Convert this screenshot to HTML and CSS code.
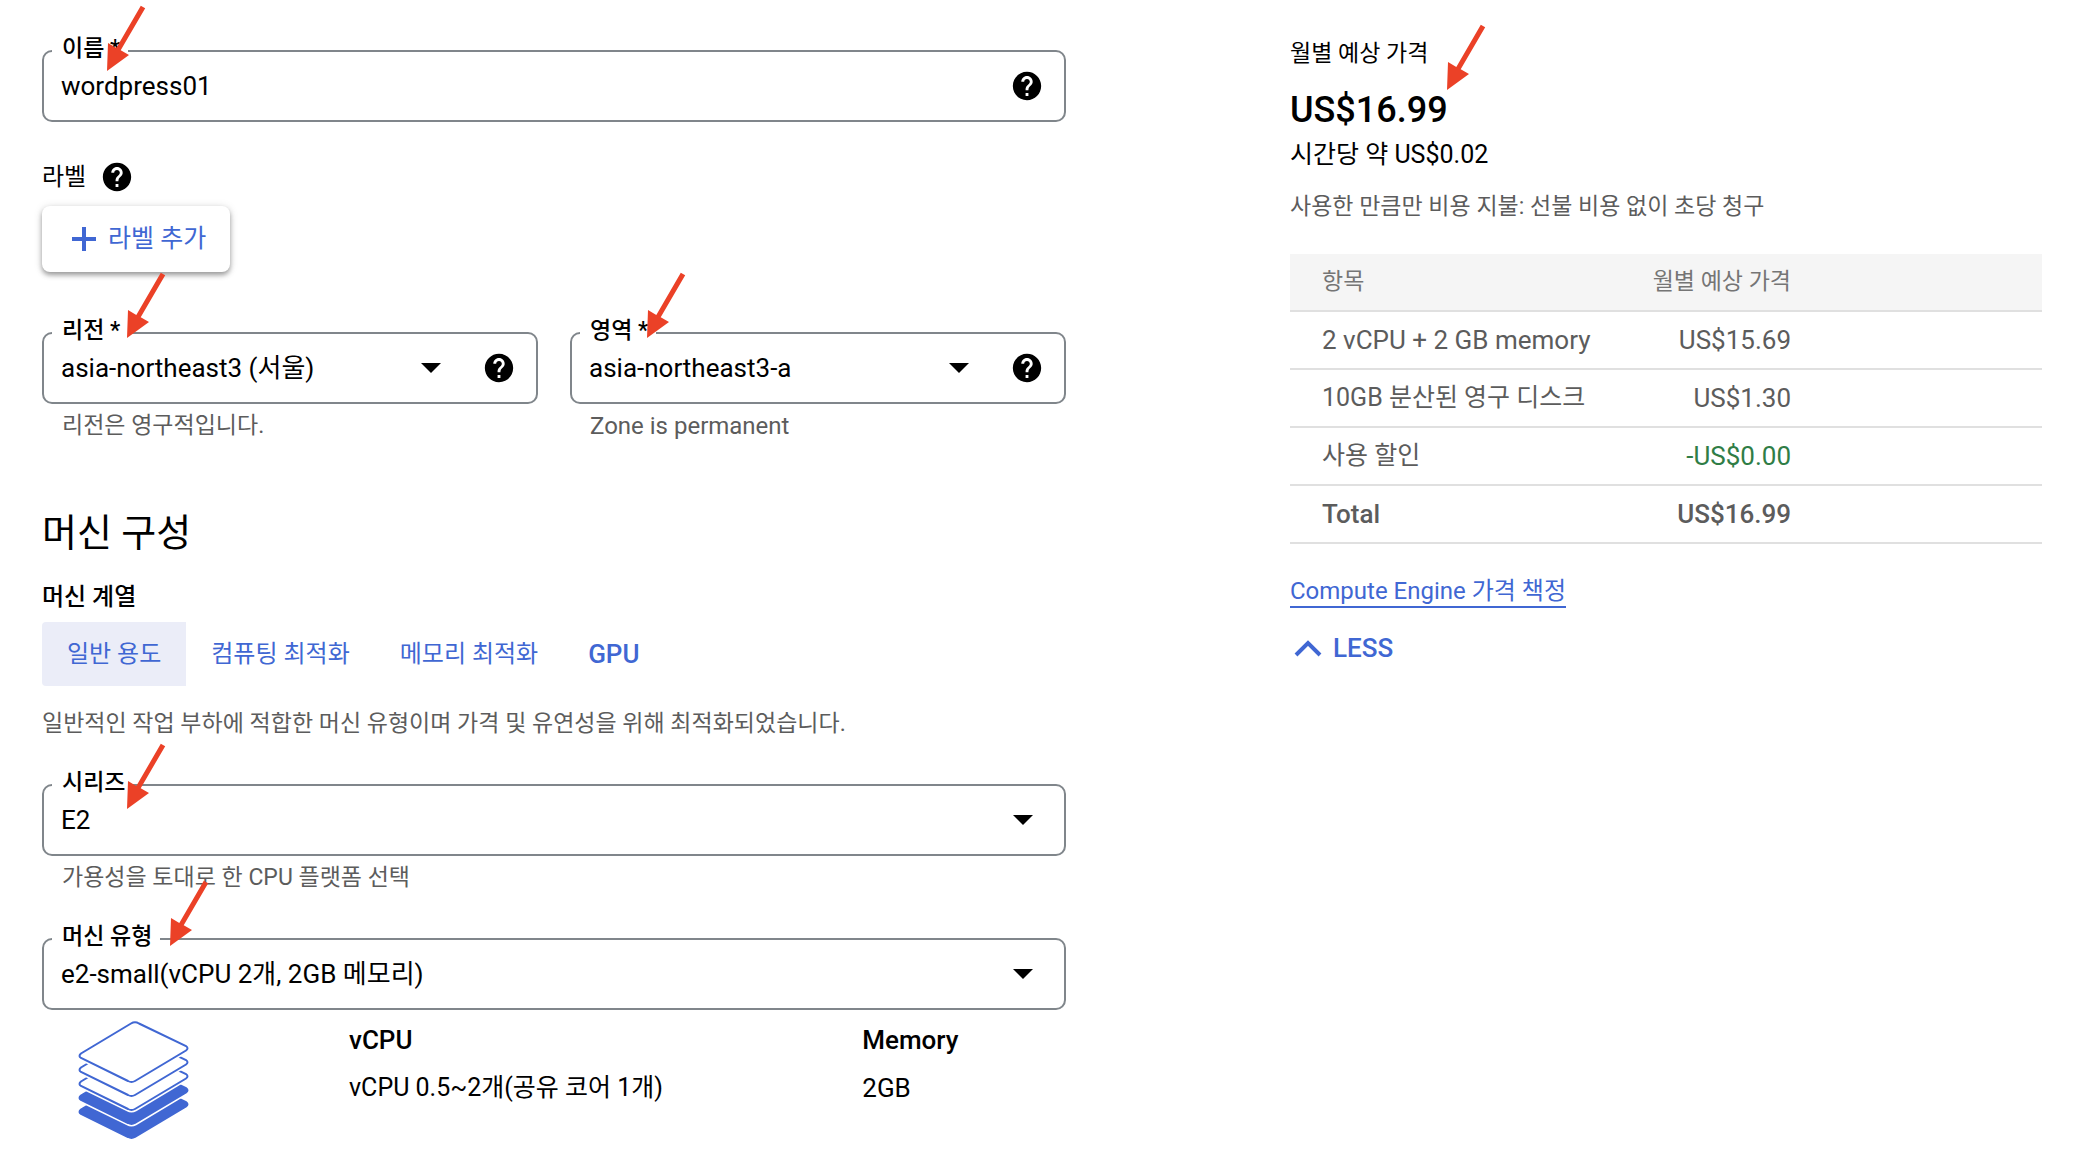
FILE: index.html
```html
<!DOCTYPE html>
<html lang="ko">
<head>
    <meta charset="UTF-8">
    <meta name="viewport" content="width=device-width, initial-scale=1.0">
    <title>인스턴스 만들기</title>

    <link rel="stylesheet" href="styles.css">
</head>
<body>

<!--Shared icons-->
<svg class="icon-defs" aria-hidden="true">
    <symbol id="help" viewBox="0 0 24 24">
        <path d="M12 2C6.48 2 2 6.48 2 12s4.48 10 10 10 10-4.48 10-10S17.52 2 12 2zm1 17h-2v-2h2v2zm2.07-7.75l-.9.92C13.45 12.9 13 13.5 13 15h-2v-.5c0-1.1.45-2.1 1.17-2.83l1.24-1.26c.37-.36.59-.86.59-1.41 0-1.1-.9-2-2-2s-2 .9-2 2H8c0-2.21 1.79-4 4-4s4 1.79 4 4c0 .88-.36 1.68-.93 2.25z"/>
    </symbol>
    <symbol id="caret" viewBox="0 0 20 10">
        <path d="M0 0h20L10 10z"/>
    </symbol>
    <symbol id="arrow" viewBox="0 0 40 68">
        <path d="M1 67 2 39l8.300 5L34.800 1.800l4.400 2.400-24.500 42L23 51z"/>
    </symbol>
</svg>

<div class="page">
    <form class="config">
        <!--Name-->
        <div class="field">
            <label class="field-label" for="name">이름 *</label>
            <div class="field-box">
                <input id="name" type="text" value="wordpress01">
                <button class="help" type="button" aria-label="도움말"><svg><use href="#help"/></svg></button>
            </div>
            <svg class="arrow arrow-name"><use href="#arrow"/></svg>
        </div>

        <!--Labels-->
        <div class="labels">
            <div class="labels-title">
                <span>라벨</span>
                <button class="help" type="button" aria-label="도움말"><svg><use href="#help"/></svg></button>
            </div>
            <button class="add-label" type="button">
                <svg viewBox="0 0 24 24"><path d="M10 0h4v10h10v4H14v10h-4V14H0v-4h10z"/></svg>
                라벨 추가
            </button>
        </div>

        <!--Region and zone-->
        <div class="field-row">
            <div class="field">
                <label class="field-label" for="region">리전 *</label>
                <div class="field-box">
                    <select id="region"><option>asia-northeast3 (서울)</option></select>
                    <svg class="caret"><use href="#caret"/></svg>
                    <button class="help" type="button" aria-label="도움말"><svg><use href="#help"/></svg></button>
                </div>
                <p class="hint">리전은 영구적입니다.</p>
                <svg class="arrow arrow-region"><use href="#arrow"/></svg>
            </div>
            <div class="field">
                <label class="field-label" for="zone">영역 *</label>
                <div class="field-box">
                    <select id="zone"><option>asia-northeast3-a</option></select>
                    <svg class="caret"><use href="#caret"/></svg>
                    <button class="help" type="button" aria-label="도움말"><svg><use href="#help"/></svg></button>
                </div>
                <p class="hint hint-latin">Zone is permanent</p>
                <svg class="arrow arrow-zone"><use href="#arrow"/></svg>
            </div>
        </div>

        <!--Machine configuration-->
        <h2>머신 구성</h2>
        <h3>머신 계열</h3>
        <div class="tabs">
            <button class="tab active" type="button">일반 용도</button>
            <button class="tab" type="button">컴퓨팅 최적화</button>
            <button class="tab" type="button">메모리 최적화</button>
            <button class="tab tab-latin" type="button">GPU</button>
        </div>
        <p class="family-text">일반적인 작업 부하에 적합한 머신 유형이며 가격 및 유연성을 위해 최적화되었습니다.</p>

        <div class="field">
            <label class="field-label" for="series">시리즈</label>
            <div class="field-box">
                <select id="series"><option>E2</option></select>
                <svg class="caret"><use href="#caret"/></svg>
            </div>
            <p class="hint">가용성을 토대로 한 CPU 플랫폼 선택</p>
            <svg class="arrow arrow-series"><use href="#arrow"/></svg>
        </div>

        <div class="field field-type">
            <label class="field-label" for="type">머신 유형</label>
            <div class="field-box">
                <select id="type"><option>e2-small(vCPU 2개, 2GB 메모리)</option></select>
                <svg class="caret"><use href="#caret"/></svg>
            </div>
            <svg class="arrow arrow-type"><use href="#arrow"/></svg>
        </div>

        <!--Machine specs-->
        <div class="specs">
            <svg class="stack" viewBox="0 0 112 120">
                <defs>
                    <path id="layer" d="M53 3.500Q57 1 61 3.500L108 26Q111 28 108 30.500L57 61Q53.500 63 50 61L3 38Q0 36 3 33.500z"/>
                </defs>
                <!--Drawn bottom up, each layer has a white rim under it-->
                <use class="slab" href="#layer" y="56"/>
                <use class="rim" href="#layer" y="42"/>
                <use class="slab" href="#layer" y="42"/>
                <use class="rim" href="#layer" y="28"/>
                <use class="sheet" href="#layer" y="28"/>
                <use class="rim" href="#layer" y="14"/>
                <use class="sheet" href="#layer" y="14"/>
                <use class="rim" href="#layer"/>
                <use class="sheet" href="#layer"/>
            </svg>
            <dl>
                <dt>vCPU</dt>
                <dd class="mixed">vCPU 0.5~2개(공유 코어 1개)</dd>
            </dl>
            <dl>
                <dt>Memory</dt>
                <dd>2GB</dd>
            </dl>
        </div>
    </form>

    <!--Monthly estimate-->
    <aside class="estimate">
        <p class="estimate-title">월별 예상 가격</p>
        <p class="price">US$16.99
            <svg class="arrow arrow-price"><use href="#arrow"/></svg>
        </p>
        <p class="hourly mixed">시간당 약 US$0.02</p>
        <p class="pay-text">사용한 만큼만 비용 지불: 선불 비용 없이 초당 청구</p>

        <table>
            <thead>
                <tr><th>항목</th><th>월별 예상 가격</th><th></th></tr>
            </thead>
            <tbody>
                <tr><td>2 vCPU + 2 GB memory</td><td>US$15.69</td><td></td></tr>
                <tr><td class="mixed">10GB 분산된 영구 디스크</td><td>US$1.30</td><td></td></tr>
                <tr><td class="mixed">사용 할인</td><td class="discount">-US$0.00</td><td></td></tr>
                <tr class="total"><td>Total</td><td>US$16.99</td><td></td></tr>
            </tbody>
        </table>

        <a class="pricing-link" href="#">Compute Engine 가격 책정</a>
        <button class="less" type="button">
            <svg viewBox="0 0 28 18"><path d="M2 16 14 4l12 12"/></svg>
            LESS
        </button>
    </aside>
</div>

</body>
</html>
```
FILE: styles.css
```css
* {
    box-sizing: border-box;
}

body {
    margin: 0;
    background-color: #fff;
    color: #000;
    font-family: Roboto, "Noto Sans CJK KR", sans-serif;
    font-size: 26px;
    line-height: 32px;
}

p, h2, h3, dl, dd {
    margin: 0;
}

button, input, select {
    font: inherit;
    color: inherit;
    margin: 0;
    padding: 0;
    border: none;
    background: none;
}

button {
    cursor: pointer;
}

.icon-defs {
    display: none;
}

/* Hangul runs wide next to Roboto */
.mixed {
    font-size: 25px;
}

/* Form on the left, price on the right */
.page {
    display: grid;
    grid-template-columns: 1024fr 752fr;
    gap: 224px;
    padding: 0 50px 24px 42px;
}

.config {
    padding-top: 50px;
}

/* Outlined fields */
.field {
    position: relative;
    flex: 1;
}

.field-label {
    position: absolute;
    left: 10px;
    top: -17px;
    padding: 0 8px 0 10px;
    background-color: #fff;
    font-size: 23px;
    font-weight: 500;
}

.field-box {
    display: flex;
    align-items: center;
    height: 72px;
    padding: 0 20px 0 17px;
    border: 2px solid #80868b;
    border-radius: 10px;
}

.field-box input,
.field-box select {
    flex: 1;
    min-width: 0;
    height: 40px;
    appearance: none;
    outline: none;
}

.caret {
    width: 20px;
    height: 10px;
    margin-right: 11px;
    pointer-events: none;
}

.caret + .help {
    margin-left: 30px;
}

.help {
    display: flex;
}

.help svg {
    width: 34px;
    height: 34px;
}

.hint {
    padding: 6px 20px 0;
    color: #5c5c5c;
    font-size: 23px;
}

.hint-latin {
    font-size: 24px;
}

.field-row {
    display: flex;
    gap: 32px;
    margin-top: 60px;
}

/* Labels */
.labels {
    margin-top: 38px;
}

.labels-title {
    display: flex;
    align-items: center;
    gap: 14px;
    height: 34px;
    font-size: 24px;
}

.add-label {
    display: flex;
    align-items: center;
    gap: 12px;
    height: 66px;
    margin-top: 12px;
    padding: 0 24px 0 30px;
    border-radius: 8px;
    box-shadow: 0 3px 5px rgba(0, 0, 0, 0.35), 0 1px 10px rgba(0, 0, 0, 0.12);
    color: #4067d3;
    font-size: 25px;
}

.add-label svg {
    width: 24px;
    height: 24px;
    fill: currentColor;
}

/* Machine configuration */
h2 {
    margin-top: 67px;
    font-size: 38px;
    font-weight: 400;
    line-height: 48px;
}

h3 {
    margin-top: 24px;
    font-size: 24px;
    font-weight: 500;
}

.tabs {
    display: flex;
    margin-top: 9px;
}

.tab {
    height: 64px;
    padding: 0 25px;
    color: #4067d3;
    font-size: 24px;
}

.tab.active {
    background-color: #ebedf8;
    border-radius: 4px 0 0 4px;
}

.tab-latin {
    font-size: 26px;
    font-weight: 500;
}

.family-text {
    margin: 22px 0 44px;
    color: #5c5c5c;
    font-size: 23px;
}

.field-type {
    margin-top: 44px;
}

.specs {
    display: flex;
    padding: 10px 0 0 36px;
}

.stack {
    width: 112px;
    height: 120px;
    margin-right: 159px;
}

.specs dl {
    flex: 514 1 0;
}

.specs dl + dl {
    flex-grow: 204;
}

.specs dt {
    margin: 4px 0 16px;
    font-weight: 500;
}

.sheet {
    fill: #fff;
    stroke: #4067d3;
    stroke-width: 2;
}

.slab {
    fill: #4067d3;
    stroke: #4067d3;
    stroke-width: 2;
}

.rim {
    fill: #fff;
    stroke: #fff;
    stroke-width: 5;
}

/* Estimate */
.estimate {
    padding-top: 38px;
}

.estimate-title {
    font-size: 23px;
}

.price {
    position: relative;
    margin-top: 16px;
    font-size: 36px;
    font-weight: 500;
    line-height: 48px;
}

.hourly {
    margin-top: 5px;
}

.pay-text {
    margin-top: 20px;
    color: #5c5c5c;
    font-size: 23px;
}

table {
    width: 100%;
    margin-top: 31px;
    border-collapse: collapse;
    table-layout: fixed;
    color: #5c5c5c;
}

th, td {
    height: 58px;
    padding: 0;
    border-bottom: 2px solid #e0e0e0;
    text-align: right;
}

th {
    height: 57px;
    background-color: #f5f5f5;
    color: #757575;
    font-size: 23px;
    font-weight: 400;
}

th:first-child, td:first-child {
    width: 44%;
    padding-left: 32px;
    text-align: left;
}

th:last-child {
    width: 251px;
}

.discount {
    color: #2f7d46;
}

.total {
    font-weight: 500;
}

.pricing-link {
    display: inline-block;
    margin-top: 32px;
    border-bottom: 2px solid #4067d3;
    color: #4067d3;
    font-size: 24px;
    line-height: 30px;
    text-decoration: none;
}

.less {
    display: flex;
    align-items: center;
    gap: 11px;
    margin-top: 24px;
    padding-left: 4px;
    color: #4067d3;
    font-weight: 500;
}

.less svg {
    width: 28px;
    height: 18px;
    fill: none;
    stroke: currentColor;
    stroke-width: 4;
}

/* Red pointers over the values to check */
.arrow {
    position: absolute;
    width: 40px;
    height: 68px;
    fill: #eb4127;
    pointer-events: none;
}

.arrow-name {
    left: 64px;
    top: -46px;
}

.arrow-region {
    left: 84px;
    top: -61px;
}

.arrow-zone {
    left: 76px;
    top: -61px;
}

.arrow-series {
    left: 84px;
    top: -42px;
}

.arrow-type {
    left: 127px;
    top: -59px;
}

.arrow-price {
    left: 156px;
    top: -63px;
}
```
